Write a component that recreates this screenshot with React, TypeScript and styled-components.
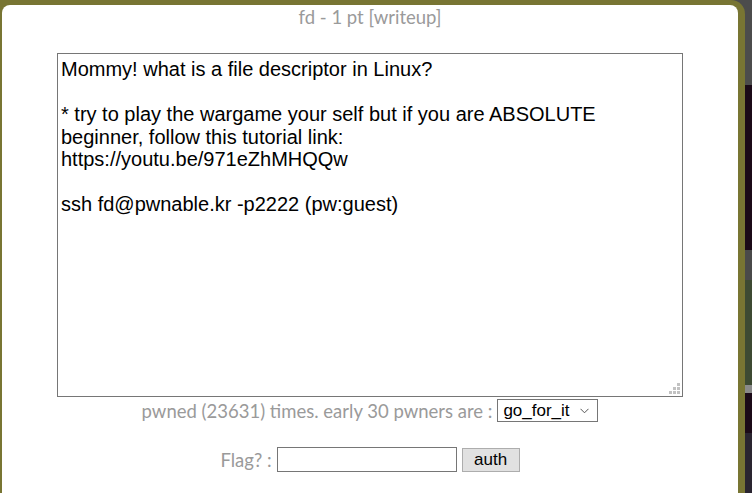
import styled, { createGlobalStyle } from "styled-components";

const GlobalStyle = createGlobalStyle`
  html, body {
    margin: 0;
    padding: 0;
    background: #4c4c4c;
    overflow: hidden;
  }
`;

const CHALLENGE_TEXT = `Mommy! what is a file descriptor in Linux?

* try to play the wargame your self but if you are ABSOLUTE beginner, follow this tutorial link:
https://youtu.be/971eZhMHQQw

ssh fd@pwnable.kr -p2222 (pw:guest)`;

const stripBlocks = [
  { height: 85, color: "#4c4c4c" },
  { height: 165, color: "#1b0a18" },
  { height: 30, color: "#4a4a4a" },
  { height: 105, color: "#3d4a33" },
  { height: 8, color: "#8a8a8a" },
  { height: 40, color: "#1b0a18" },
  { height: 60, color: "#2a2530" },
];

// resize grip squares: [col, row]
const gripDots = [
  [2, 0],
  [1, 1],
  [2, 1],
  [0, 2],
  [1, 2],
  [2, 2],
];

export default function App() {
  return (
    <Page>
      <GlobalStyle />
      <Frame>
        <Modal>
          <Title>fd - 1 pt [writeup]</Title>
          <TextareaWrap>
            <Description readOnly defaultValue={CHALLENGE_TEXT} />
            <Grip width="11" height="11" viewBox="0 0 11 11">
              {gripDots.map(([c, r], i) => (
                <rect key={i} x={c * 4} y={r * 4} width="3" height="3" fill="#c2c2c2" />
              ))}
            </Grip>
          </TextareaWrap>
          <PwnedRow>
            <Caption>pwned (23631) times. early 30 pwners are :</Caption>
            <SelectWrap>
              <PwnerSelect defaultValue="go_for_it">
                <option value="go_for_it">go_for_it</option>
              </PwnerSelect>
              <Chevron width="9" height="6" viewBox="0 0 9 6">
                <path d="M0.5 0.8 L4.5 4.8 L8.5 0.8" fill="none" stroke="#555" strokeWidth="1" />
              </Chevron>
            </SelectWrap>
          </PwnedRow>
          <FlagRow>
            <Caption>Flag? :</Caption>
            <FlagInput type="text" />
            <AuthButton>auth</AuthButton>
          </FlagRow>
        </Modal>
      </Frame>
      <Strip>
        {stripBlocks.map((b, i) => (
          <StripBlock key={i} $height={b.height} $color={b.color} />
        ))}
      </Strip>
    </Page>
  );
}

const Page = styled.div`
  display: flex;
  width: 752px;
  height: 493px;
  overflow: hidden;
`;

const Frame = styled.div`
  width: 745px;
  flex-shrink: 0;
  height: 500px;
  background: #787533;
  padding: 5px 7px 0 2px;
  box-sizing: border-box;
  border-radius: 0 14px 0 0;
`;

const Modal = styled.div`
  background: #ffffff;
  height: 100%;
  border-radius: 8px;
  display: flex;
  flex-direction: column;
  align-items: center;
`;

const Title = styled.div`
  font-family: Lato, "Liberation Sans", sans-serif;
  font-size: 18.5px;
  color: #9a9a9a;
  line-height: 22px;
  margin-top: 1px;
`;

const TextareaWrap = styled.div`
  position: relative;
  margin-top: 25px;
  width: 626px;
  height: 344px;
  flex-shrink: 0;
`;

const Description = styled.textarea`
  display: block;
  width: 100%;
  height: 100%;
  box-sizing: border-box;
  border: 1px solid #767676;
  padding: 4px 3px 2px 3px;
  margin: 0;
  font-family: "Liberation Sans", Arial, sans-serif;
  font-size: 20px;
  line-height: 22.5px;
  color: #000000;
  resize: none;
  outline: none;
  overflow: hidden;
`;

const Grip = styled.svg`
  position: absolute;
  right: 3px;
  bottom: 3px;
`;

const PwnedRow = styled.div`
  display: flex;
  align-items: center;
  gap: 5px;
  margin-top: 2px;
`;

const Caption = styled.span`
  font-family: Lato, "Liberation Sans", sans-serif;
  font-size: 18.5px;
  color: #9a9a9a;
`;

const SelectWrap = styled.div`
  position: relative;
  display: flex;
`;

const PwnerSelect = styled.select`
  appearance: none;
  width: 101px;
  height: 23px;
  box-sizing: border-box;
  border: 1px solid #767676;
  border-radius: 0;
  background: #ffffff;
  font-family: "Liberation Sans", Arial, sans-serif;
  font-size: 17px;
  color: #000000;
  padding: 0 0 0 5px;
  outline: none;
`;

const Chevron = styled.svg`
  position: absolute;
  right: 9px;
  top: 9px;
  pointer-events: none;
`;

const FlagRow = styled.div`
  display: flex;
  align-items: center;
  gap: 5px;
  margin-top: 25px;
`;

const FlagInput = styled.input`
  width: 180px;
  height: 25px;
  box-sizing: border-box;
  border: 1px solid #767676;
  outline: none;
  padding: 0 3px;
  margin: 0;
`;

const AuthButton = styled.button`
  height: 24px;
  width: 58px;
  box-sizing: border-box;
  border: 1px solid #adadad;
  background: #e1e1e1;
  font-family: "Liberation Sans", Arial, sans-serif;
  font-size: 17px;
  color: #000000;
  padding: 0;
  margin: 0;
`;

const Strip = styled.div`
  flex: 1;
  display: flex;
  flex-direction: column;
`;

const StripBlock = styled.div<{ $height: number; $color: string }>`
  height: ${(p) => p.$height}px;
  background: ${(p) => p.$color};
  flex-shrink: 0;
`;
